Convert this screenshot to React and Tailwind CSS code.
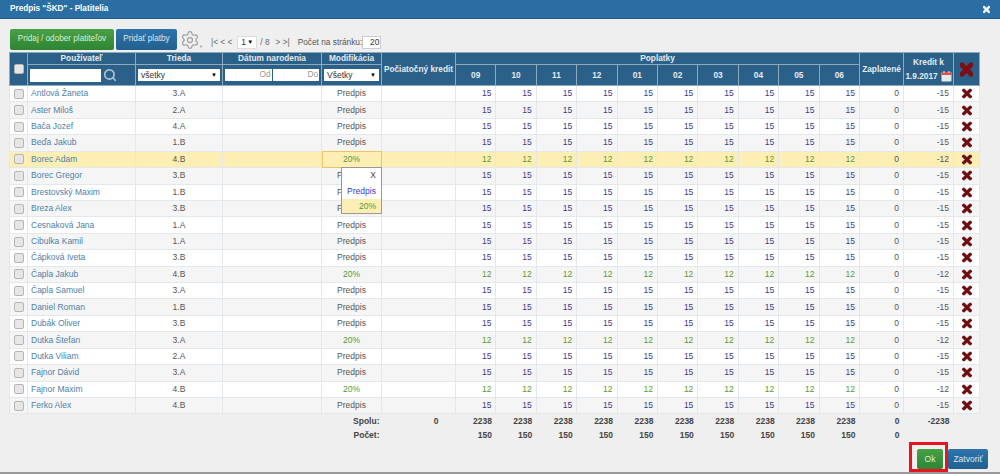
import { Search, Settings } from 'lucide-react';
import { FaTimes } from 'react-icons/fa';

const rows = [
  ['Antlová Žaneta', '3.A'], ['Aster Miloš', '2.A'], ['Bača Jozef', '4.A'], ['Beďa Jakub', '1.B'],
  ['Borec Adam', '4.B', true], ['Borec Gregor', '3.B'], ['Brestovský Maxim', '1.B'], ['Breza Alex', '3.B'],
  ['Cesnaková Jana', '1.A'], ['Cibulka Kamil', '1.A'], ['Čápková Iveta', '3.B'], ['Čapla Jakub', '4.B', true],
  ['Čapla Samuel', '3.A'], ['Daniel Roman', '1.B'], ['Dubák Oliver', '3.B'], ['Dutka Štefan', '3.A', true],
  ['Dutka Viliam', '2.A'], ['Fajnor Dávid', '3.A'], ['Fajnor Maxim', '4.B', true], ['Ferko Alex', '4.B'],
];
const months = ['09', '10', '11', '12', '01', '02', '03', '04', '05', '06'];

const th = 'border border-[#8fa9bd] bg-[#2b6089] text-[8.3px] leading-[11px] font-bold text-[#e4ecf2] text-center p-0';
const td = 'border border-[#e2e8ec] text-[8.5px] leading-[11px] p-0';

const Box = ({ className }) => (
  <span className={'block w-[10px] h-[10px] rounded-[2px] border border-[#b5b5b5] bg-[#e6e6e6] ' + className} />
);

const Drop = ({ label, className }) => (
  <div className={'flex items-center justify-between bg-white text-[#333] text-[8.5px] font-normal px-[3px] ' + className}>
    <span>{label}</span>
    <span className="text-[6px] text-black">▼</span>
  </div>
);

const App = () => {
  return (
    <div className="w-[1000px] h-[474px] overflow-hidden flex flex-col bg-[#efefef] border-b-2 border-[#9a9a9a] font-['Liberation_Sans',Arial,sans-serif] text-[#555]">
      <div className="h-[19px] shrink-0 flex items-center justify-between pl-[10px] pr-[10px] bg-[#2b6ea3] border-b border-[#235a85] text-white text-[8.2px] font-bold">
        <span>Predpis "ŠKD" - Platitelia</span>
        <FaTimes className="w-[7px] h-[11px]" stroke="currentColor" strokeWidth={40} />
      </div>

      <div className="h-[33px] shrink-0 flex items-end pl-[10px] pb-[2px]">
        <button className="w-[104px] h-[21px] rounded-[2px] bg-gradient-to-b from-[#48a046] to-[#2e8533] text-[#dcefd9] text-[8.2px]">Pridaj / odober platiteľov</button>
        <button className="ml-[2px] w-[61px] h-[21px] rounded-[2px] bg-gradient-to-b from-[#2d74ab] to-[#22608f] text-[#dbe8f2] text-[8.2px]">Pridať platby</button>
        <div className="ml-[3px] w-[24px] h-[22px] flex items-end">
          <Settings className="w-[20px] h-[20px] text-[#a0a0a0]" strokeWidth={1.5} />
          <span className="text-[4px] text-[#999] -ml-[1px]">▼</span>
        </div>
        <div className="ml-[7px] flex items-center h-[14px] mb-[1px] text-[8.3px] text-[#666]">
          <span>|&lt; &lt; &lt;</span>
          <Drop label="1" className="ml-[5px] w-[20px] h-[13px] border border-[#ddd]" />
          <span className="ml-[3px]">/ 8</span>
          <span className="ml-[6px]">&gt; &gt;|</span>
          <span className="ml-[8px] text-[#555]">Počet na stránku:</span>
          <span className="ml-0 w-[19px] h-[13px] bg-white border border-[#ccc] text-right pr-px text-[#333] leading-[11px]">20</span>
        </div>
      </div>

      <div className="pl-[9px]">
        <table className="table-fixed border-collapse w-[970px]">
          <colgroup>
            <col className="w-[18px]" />
            <col className="w-[108px]" />
            <col className="w-[87px]" />
            <col className="w-[99px]" />
            <col className="w-[60px]" />
            <col className="w-[74px]" />
            {months.map((m) => <col key={m} className="w-[40.4px]" />)}
            <col className="w-[44px]" />
            <col className="w-[50px]" />
            <col className="w-[26px]" />
          </colgroup>
          <thead>
            <tr className="h-[12px]">
              <th rowSpan={2} className={th}><Box className="mx-auto" /></th>
              <th className={th}>Používateľ</th>
              <th className={th}>Trieda</th>
              <th className={th}>Dátum narodenia</th>
              <th className={th}>Modifikácia</th>
              <th rowSpan={2} className={th}>Počiatočný kredit</th>
              <th colSpan={10} className={th}>Poplatky</th>
              <th rowSpan={2} className={th}>Zaplatené</th>
              <th rowSpan={2} className={th + ' leading-[14px]'}>
                Kredit k<br />
                <span className="inline-flex items-center gap-[3px]">
                  1.9.2017
                  <svg width="11" height="11" viewBox="0 0 11 11">
                    <rect x="0.5" y="1" width="10" height="9.5" rx="1" fill="#e8e8e8" />
                    <rect x="0.5" y="1" width="10" height="3" fill="#d9534f" />
                    <rect x="2.5" y="0" width="1" height="2" fill="#eee" />
                    <rect x="7.5" y="0" width="1" height="2" fill="#eee" />
                  </svg>
                </span>
              </th>
              <th rowSpan={2} className={th}>
                <FaTimes className="w-[13px] h-[19px] mx-auto text-[#7d0f14]" stroke="currentColor" strokeWidth={40} />
              </th>
            </tr>
            <tr className="h-[21px]">
              <th className={th}>
                <div className="flex items-center pl-[2px] gap-[2px]">
                  <div className="w-[71px] h-[13px] bg-white" />
                  <Search className="w-[14px] h-[14px] text-[#a9c0d2]" strokeWidth={3} />
                </div>
              </th>
              <th className={th}>
                <Drop label="všetky" className="mx-[2px] h-[12px]" />
              </th>
              <th className={th}>
                <div className="flex h-[12px] mx-[2px] gap-px font-normal text-[#999]">
                  <div className="flex-1 bg-white text-right pr-px">Od</div>
                  <div className="flex-1 bg-white text-right pr-px">Do</div>
                </div>
              </th>
              <th className={th}>
                <Drop label="Všetky" className="mx-[2px] h-[12px]" />
              </th>
              {months.map((m) => <th key={m} className={th}>{m}</th>)}
            </tr>
          </thead>
          <tbody>
            {rows.map(([name, cls, disc], i) => {
              const active = i === 4;
              const val = disc ? 12 : 15;
              const bg = active ? 'bg-[#fdeeb4]' : i % 2 ? 'bg-[#f5f5f5]' : 'bg-white';
              return (
                <tr key={name} className={'h-[16.43px] ' + bg}>
                  <td className={td}><Box className="mx-auto" /></td>
                  <td className={td + ' pl-[3px] text-[#4f7fa8]'}>{name}</td>
                  <td className={td + ' text-center'}>{cls}</td>
                  <td className={td}></td>
                  <td className={td + ' relative text-center ' + (disc ? 'text-[#4d9a3a] ' : '') + (active ? 'outline outline-1 -outline-offset-1 outline-[#f0c266]' : '')}>
                    {disc ? '20%' : 'Predpis'}
                    {active && (
                      <div className="absolute z-10 left-[19px] top-[15px] w-[41px] bg-white border border-[#999] text-right">
                        <div className="h-[15px] leading-[15px] pr-[5px] text-[#444]">X</div>
                        <div className="h-[16px] leading-[16px] text-center text-[#3a3ad0]">Predpis</div>
                        <div className="h-[14px] leading-[14px] pr-[5px] bg-[#fdeeb4] text-[#4d9a3a]">20%</div>
                      </div>
                    )}
                  </td>
                  <td className={td}></td>
                  {months.map((m) => (
                    <td key={m} className={td + ' text-right pr-[4px] ' + (disc ? 'text-[#5b9a2f]' : 'text-[#3b3b8f]')}>{val}</td>
                  ))}
                  <td className={td + ' text-right pr-[4px]'}>0</td>
                  <td className={td + ' text-right pr-[4px]'}>{disc ? '-12' : '-15'}</td>
                  <td className={td}><FaTimes className="w-[10px] h-[13px] mx-auto text-[#6e0d12]" stroke="currentColor" strokeWidth={40} /></td>
                </tr>
              );
            })}
          </tbody>
          <tfoot className="text-[8.5px] font-bold text-[#444]">
            <tr className="h-[15px]">
              <td colSpan={5} className="text-right pr-[2px] p-0">Spolu:</td>
              <td className="text-right pr-[17px] p-0">0</td>
              {months.map((m) => <td key={m} className="text-right pr-[4px] p-0">2238</td>)}
              <td className="text-right pr-[4px] p-0">0</td>
              <td className="text-right pr-[4px] p-0">-2238</td>
              <td />
            </tr>
            <tr className="h-[13px]">
              <td colSpan={5} className="text-right pr-[2px] p-0">Počet:</td>
              <td />
              {months.map((m) => <td key={m} className="text-right pr-[4px] p-0">150</td>)}
              <td className="text-right pr-[4px] p-0">0</td>
              <td colSpan={2} />
            </tr>
          </tfoot>
        </table>
      </div>

      <div className="mt-auto mb-[8px] flex justify-end items-end pr-[12px]">
        <div className="border-[3px] border-[#e8141f] pl-[5px] pr-[2px] pt-[4px]">
          <button className="block w-[26px] h-[20px] rounded-[2px] bg-gradient-to-b from-[#48a046] to-[#2e8533] text-[#dcefd9] text-[8.5px]">Ok</button>
        </div>
        <button className="w-[40px] h-[20px] mb-[3px] rounded-[2px] bg-gradient-to-b from-[#2d74ab] to-[#22608f] text-[#dbe8f2] text-[8.5px]">Zatvoriť</button>
      </div>
    </div>
  );
};

export default App;
